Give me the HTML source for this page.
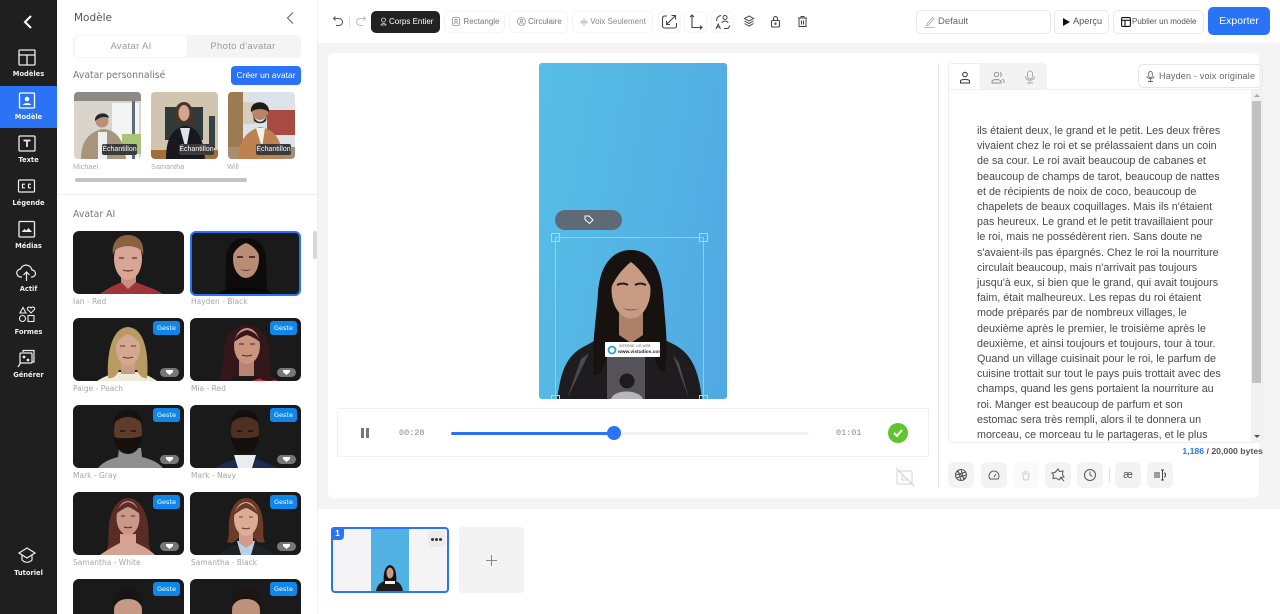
<!DOCTYPE html>
<html lang="fr"><head><meta charset="utf-8"><title>Éditeur</title>
<style>
html,body{margin:0;padding:0;width:1280px;height:614px;overflow:hidden;background:#fff;font-family:"Liberation Sans",sans-serif}
*{box-sizing:border-box}
#root{position:relative;width:1280px;height:614px;overflow:hidden;background:#fff}
.a{position:absolute}
.t{position:absolute;white-space:nowrap}
#side{left:0;top:0;width:57px;height:614px;background:#1f1f1f}
.nav{position:absolute;left:0;width:57px;height:43px;color:#fff;font:bold 6.7px "DejaVu Sans",sans-serif;text-align:center}
.nav svg{position:absolute;left:15px;top:-1px}
.nav span{position:absolute;left:0;right:0;top:21px;color:#f0f0f0}
.p{font-family:"DejaVu Sans",sans-serif}
.lab{position:absolute;font:7.5px "DejaVu Sans",sans-serif;color:#a6a6a6;white-space:nowrap}
.card{position:absolute;width:111px;height:63px;border-radius:6px;background:#1a1a1a;overflow:hidden}
.card svg{position:absolute;left:0;top:0}
.g{position:absolute;right:4px;top:3px;width:27px;height:14px;background:#0f87ea;color:#fff;border-radius:3px;font:6.5px/14px "DejaVu Sans",sans-serif;text-align:center}
.d{position:absolute;right:5px;bottom:4px;width:19px;height:9px;background:#777;border-radius:5px}
.d:after{content:"";position:absolute;left:6px;top:2px;width:7px;height:5px;background:#fff;clip-path:polygon(0 0,100% 0,100% 40%,50% 100%,0 40%)}
.btn{position:absolute;top:11px;height:22px;border:1px solid #f4f4f4;border-radius:5px;font-size:8px;color:#777;line-height:20px;white-space:nowrap;text-align:center}
.ic{position:absolute;top:11px;width:23px;height:22px;border:1px solid #f6f6f6;border-radius:5px}
.tb{position:absolute;top:462px;width:26px;height:26px;background:#f3f3f3;border-radius:6px}
.tb svg{position:absolute;left:6px;top:6px}
#txt{left:977px;top:124px;font-size:10.75px;line-height:15.2px;color:#4a4a4a;white-space:nowrap}
.sm{position:absolute;top:144px;width:35px;height:11px;background:#3a3a3a;border-radius:2px;color:#fff;font-size:7px;line-height:11px;text-align:center}
svg{display:block}
</style></head><body><div id="root">

<div class="a" id="side"></div>
<svg class="a" style="left:21px;top:14px" width="14" height="16" viewBox="0 0 14 16" fill="none" stroke="#fff" stroke-width="2"><path d="M10 2 4 8l6 6"/></svg>

<div class="nav" style="top:49px"><svg width="23" height="23" viewBox="0 0 23 23" fill="none" stroke="#eee" stroke-width="1.300"><rect x="4" y="2" width="16" height="15" rx="1"/><path d="M4 7h16M12 7v10"/></svg><span>Modèles</span></div>
<div class="a" style="left:0;top:86px;width:57px;height:42px;background:#2b73f6"></div>
<div class="nav" style="top:92px"><svg width="23" height="23" viewBox="0 0 23 23" fill="none"><rect x="4.500" y="2" width="15" height="15" rx="1" stroke="#fff" stroke-width="1.300"/><circle cx="12" cy="8" r="2.300" fill="#fff"/><path d="M8 14c0-2.500 8-2.500 8 0z" fill="#fff"/></svg><span>Modèle</span></div>
<div class="nav" style="top:135px"><svg width="23" height="23" viewBox="0 0 23 23" fill="none" stroke="#eee" stroke-width="1.300"><rect x="4" y="2" width="16" height="15" rx="1"/><path d="M8.500 6.500h7M12 6.500V13" stroke-width="1.700"/></svg><span>Texte</span></div>
<div class="nav" style="top:178px"><svg width="23" height="23" viewBox="0 0 23 23" fill="none" stroke="#eee" stroke-width="1.200"><rect x="3.500" y="3" width="16" height="12" rx="1"/><path d="M10 7.200H7.500v3.600H10M16 7.200h-2.500v3.600H16"/></svg><span>Légende</span></div>
<div class="nav" style="top:221px"><svg width="23" height="23" viewBox="0 0 23 23" fill="none"><rect x="4" y="1.500" width="15.500" height="15.500" rx="1" stroke="#eee" stroke-width="1.300"/><path d="M6.500 12l3-3 2 1.500 2-2.500 3.500 4z" fill="#eee"/></svg><span>Médias</span></div>
<div class="nav" style="top:264px"><svg width="23" height="23" viewBox="0 0 23 23" fill="none" stroke="#eee" stroke-width="1.200"><path d="M7 14H6a4 4 0 0 1-.500-8 6 6 0 0 1 11.500 1 3.500 3.500 0 0 1 0 7h-1M11.500 18V9M8.500 12l3-3 3 3"/></svg><span>Actif</span></div>
<div class="nav" style="top:307px"><svg width="23" height="23" viewBox="0 0 23 23" fill="none" stroke="#eee" stroke-width="1.100"><path d="M8 1.500l3 5.500H5zM16 7l-3.300-3.300c-1.500-2 1.700-3.700 3.300-1.700 1.600-2 4.800-.3 3.300 1.700zM4.500 12.500a3 3 0 1 0 6 0 3 3 0 1 0-6 0z"/><rect x="13" y="9.500" width="6" height="6"/></svg><span>Formes</span></div>
<div class="nav" style="top:350px"><svg width="23" height="23" viewBox="0 0 23 23" fill="none" stroke="#eee" stroke-width="1.200"><path d="M8 3V1.500h11v11.500h-2"/><rect x="5" y="4" width="12" height="10" rx="1"/><circle cx="9" cy="8" r=".8" fill="#eee"/><circle cx="13" cy="11" r=".8" fill="#eee"/><path d="M5.500 14 3 18"/></svg><span>Générer</span></div>
<div class="nav" style="top:546px"><svg style="top:0" width="23" height="20" viewBox="0 0 23 20" fill="none" stroke="#eee" stroke-width="1.200"><path d="M12 2 4 7l8 5 8-5zM7 9v5c3 3 7 3 10 0V9"/></svg><span style="top:23px">Tutoriel</span></div>

<div class="a" style="left:317px;top:0;width:1px;height:614px;background:#efefef"></div>

<div class="t p" style="left:74px;top:12px;font-size:10.500px;color:#555">Modèle</div>
<svg class="a" style="left:284px;top:11px" width="12" height="14" viewBox="0 0 12 14" fill="none" stroke="#666" stroke-width="1.100"><path d="M9 1.500 3.500 7 9 12.500"/></svg>

<div class="a" style="left:73px;top:35px;width:228px;height:23px;background:#f4f4f4;border-radius:5px"></div>
<div class="a" style="left:75px;top:36px;width:112px;height:21px;background:#fff;border-radius:4px"></div>
<div class="t" style="left:75px;top:41px;width:112px;text-align:center;font-size:9.500px;color:#9a9a9a;letter-spacing:.3px">Avatar AI</div>
<div class="t" style="left:187px;top:41px;width:112px;text-align:center;font-size:9.500px;color:#9a9a9a;letter-spacing:.3px">Photo d'avatar</div>
<div class="t p" style="left:73px;top:70px;font-size:9.300px;color:#777">Avatar personnalisé</div>
<div class="a" style="left:231px;top:66px;width:70px;height:19px;background:#2b73f6;border-radius:4px;color:#fff;font-size:8.500px;line-height:19px;text-align:center">Créer un avatar</div>

<!-- custom avatars -->
<div class="a" style="left:74px;top:92px;width:67px;height:67px;border-radius:4px;overflow:hidden"><svg width="67" height="67" viewBox="0 0 67 67"><rect width="67" height="67" fill="#d9d5cd"/><rect width="67" height="9" fill="#8b8a84"/><rect x="38" y="11" width="27" height="56" fill="#f3f5f5"/><rect x="58" y="9" width="3" height="58" fill="#5d6b7a"/><rect x="48" y="42" width="19" height="20" fill="#a9c57a"/><path d="M7 67c0-16 6-26 21-30 15 0 22 12 24 30z" fill="#a8967c"/><rect x="24" y="40" width="9" height="27" fill="#efefef"/><circle cx="28" cy="29" r="6.500" fill="#bb8f78"/><path d="M21 29c-1-9 13-10 14-3-5-2-9-1-14 3z" fill="#23252b"/></svg></div>
<div class="a" style="left:151px;top:92px;width:67px;height:67px;border-radius:4px;overflow:hidden"><svg width="67" height="67" viewBox="0 0 67 67"><rect width="67" height="67" fill="#cfc5b0"/><rect x="14" y="15" width="38" height="33" fill="#2e3a3c"/><rect y="58" width="67" height="9" fill="#a66d3c"/><rect x="58" y="24" width="6" height="32" fill="#364245"/><path d="M15 67c0-20 6-30 18-33 14 0 19 12 21 33z" fill="#17191f"/><path d="M29 36h10l-4 22z" fill="#e3e3ee"/><path d="M24 31c-3-12 2-21 9-21s11 9 9 21z" fill="#4a3428"/><ellipse cx="33" cy="21" rx="5.500" ry="8" fill="#d3a78f"/></svg></div>
<div class="a" style="left:228px;top:92px;width:67px;height:67px;border-radius:4px;overflow:hidden"><svg width="67" height="67" viewBox="0 0 67 67"><rect width="67" height="67" fill="#dbe3e8"/><rect width="15" height="67" fill="#9c7a52"/><rect x="15" y="10" width="12" height="22" fill="#d6cdbf"/><rect x="39" y="18" width="28" height="25" fill="#a84a42"/><rect y="55" width="67" height="12" fill="#a88d70"/><path d="M10 67c1-18 8-28 22-32 15 2 22 14 23 32z" fill="#bd8250"/><path d="M28 36h9l-3 20z" fill="#f3efe9"/><circle cx="32" cy="20" r="8" fill="#b98565"/><path d="M23 20c-2-13 19-13 18 0-5-4-13-4-18 0z" fill="#201a18"/><path d="M25 23c3 9 11 9 14 0l-1 6c-3 3-9 3-12 0z" fill="#3b2a22"/></svg></div>
<div class="sm" style="left:102px">Échantillon</div>
<div class="sm" style="left:179px">Échantillon</div>
<div class="sm" style="left:256px">Échantillon</div>
<div class="t" style="left:73px;top:162px;font-size:7.300px;color:#aaa">Michael</div>
<div class="t" style="left:151px;top:162px;font-size:7.300px;color:#aaa">Samantha</div>
<div class="t" style="left:227px;top:162px;font-size:7.300px;color:#aaa">Will</div>
<div class="a" style="left:75px;top:178px;width:172px;height:4px;background:#c4c4c4;border-radius:2px"></div>
<div class="a" style="left:57px;top:194px;width:260px;height:1px;background:#efefef"></div>
<div class="t p" style="left:73px;top:209px;font-size:9.300px;color:#777">Avatar AI</div>
<div class="a" style="left:313px;top:231px;width:4px;height:28px;background:#d8d8d8;border-radius:2px"></div>

<!-- AI cards -->
<div class="card" style="left:73px;top:231px"><svg width="111" height="63" viewBox="0 0 111 63"><path d="M27 63c8-6 15-9 22-12h13c8 3 20 7 28 12z" fill="#a03539"/><path d="M48 42v9l7 7 8-7v-9z" fill="#c99080"/><ellipse cx="55" cy="28" rx="14" ry="21" fill="#d9a696"/><path d="M40 24c-2-13 6-20 15-20s17 6 15 20c-2-6-5-8-15-9-10 1-13 3-15 9z" fill="#8a6242"/><path d="M46 27h5M59 27h5M50 39q5 2 10 0" stroke="#5a3530" stroke-width="1.200" fill="none"/></svg></div>
<div class="a" style="left:190px;top:231px;width:111px;height:65px;border-radius:6px;background:#1a1a1a;border:2px solid #2b73f6;overflow:hidden"><svg width="107" height="61" viewBox="0 0 107 61"><path d="M33 61c1-14 0-32 2-42 2-9 10-14 19-14s17 5 19 14c2 10 1 28 3 42z" fill="#0e0b0b"/><path d="M24 61c8-3 12-5 18-6h24c6 1 11 3 16 6z" fill="#060606"/><ellipse cx="54" cy="26" rx="13" ry="19" fill="#b98c75"/><path d="M41 22c1-8 6-14 13-16 7 2 12 8 13 16-2-5-7-10-13-12-6 2-11 7-13 12z" fill="#0e0b0b"/><path d="M45 24h6M57 24h6" stroke="#2c1a14" stroke-width="1.400"/><path d="M48 36q6 2 12 0-6 4-12 0z" fill="#6a3b35"/></svg></div>
<div class="lab" style="left:73px;top:296.500px">Ian - Red</div>
<div class="lab" style="left:191px;top:296.500px">Hayden - Black</div>

<div class="card" style="left:73px;top:318px"><svg width="111" height="63" viewBox="0 0 111 63"><path d="M24 63c8-5 14-7 22-9h18c9 2 14 5 20 9z" fill="#f1ead8"/><path d="M35 60c-1-20 2-50 20-51 18 1 21 31 19 51-4 1-8-2-10-8H46c-2 6-6 9-11 8z" fill="#b99a62"/><path d="M48 42h14v14H48z" fill="#c89c86"/><ellipse cx="55" cy="30" rx="12" ry="18" fill="#d4a890"/><path d="M43 26c1-8 6-13 12-14 6 1 11 6 12 14-3-5-7-8-12-10-5 2-9 5-12 10z" fill="#b99a62"/><path d="M47 28h5M58 28h5M50 39q5 2 10 0" stroke="#5a3530" stroke-width="1.100" fill="none"/></svg><div class="g">Geste</div><div class="d"></div></div>
<div class="card" style="left:190px;top:318px"><svg width="111" height="63" viewBox="0 0 111 63"><path d="M62 63l14-5 12 5z" fill="#d02a28"/><path d="M29 62c4-8 4-20 5-32 2-14 12-23 23-23s20 9 22 23c1 12 0 24 5 32-5 2-13 1-17-4H45c-4 5-10 6-16 4z" fill="#33171b"/><path d="M49 42h15v16H49z" fill="#b98570"/><ellipse cx="57" cy="28" rx="13" ry="18" fill="#c9957f"/><path d="M44 24c2-7 7-11 13-12 6 1 11 5 13 12-4-3-9-6-13-7-4 1-9 4-13 7z" fill="#33171b"/><path d="M49 26h5M60 26h5M52 37q5 2 10 0" stroke="#4a2420" stroke-width="1.100" fill="none"/></svg><div class="g">Geste</div><div class="d"></div></div>
<div class="lab" style="left:73px;top:383.500px">Paige - Peach</div>
<div class="lab" style="left:191px;top:383.500px">Mia - Red</div>

<div class="card" style="left:73px;top:405px"><svg width="111" height="63" viewBox="0 0 111 63"><path d="M25 63c6-7 13-9 20-11l1-9h22l1 9c8 2 16 5 21 11z" fill="#8f8f8f"/><ellipse cx="55" cy="26" rx="14" ry="21" fill="#5e3b2b"/><path d="M41 31c3 3 7 2 14 2s11-1 14-2c0 10-6 18-14 18s-14-8-14-18z" fill="#17100d"/><path d="M41 18c1-10 8-13 14-13s13 3 14 13c-4-4-9-6-14-6s-10 2-14 6z" fill="#17100d"/><path d="M47 26h5M58 26h5" stroke="#1a0f0a" stroke-width="1.200"/></svg><div class="g">Geste</div><div class="d"></div></div>
<div class="card" style="left:190px;top:405px"><svg width="111" height="63" viewBox="0 0 111 63"><path d="M26 63c6-5 14-7 20-9h20c7 2 14 5 21 9z" fill="#1d2a55"/><path d="M44 50h22l-4 13H48z" fill="#ececec"/><ellipse cx="55" cy="26" rx="14" ry="21" fill="#4e3023"/><path d="M41 31c3 3 7 2 14 2s11-1 14-2c0 10-6 18-14 18s-14-8-14-18z" fill="#140e0c"/><path d="M41 18c1-10 8-13 14-13s13 3 14 13c-4-4-9-6-14-6s-10 2-14 6z" fill="#140e0c"/><path d="M47 26h5M58 26h5" stroke="#120a08" stroke-width="1.200"/></svg><div class="g">Geste</div><div class="d"></div></div>
<div class="lab" style="left:73px;top:470.500px">Mark - Gray</div>
<div class="lab" style="left:191px;top:470.500px">Mark - Navy</div>

<div class="card" style="left:73px;top:492px"><svg width="111" height="63" viewBox="0 0 111 63"><path d="M33 60c3-6 2-15 3-28 2-16 10-26 19-26s18 10 20 26c1 13 0 22 3 28-6 2-12 1-15-3H47c-3 4-8 5-14 3z" fill="#5a2c26"/><path d="M27 63c7-5 14-9 20-12v-9h16v9c7 3 14 7 19 12z" fill="#d6a393"/><ellipse cx="55" cy="26" rx="11.500" ry="17" fill="#c9988a"/><path d="M43 22c2-7 7-11 12-12 5 1 10 5 12 12-4-3-8-6-12-7-4 1-8 4-12 7z" fill="#5a2c26"/><path d="M48 24h4M58 24h4M51 35q4 1.500 8 0" stroke="#5a2a26" stroke-width="1.100" fill="none"/></svg><div class="g">Geste</div><div class="d"></div></div>
<div class="card" style="left:190px;top:492px"><svg width="111" height="63" viewBox="0 0 111 63"><path d="M37 50c3-6 1-11 2-20 1-14 8-24 17-24s16 10 17 24c1 9-1 14 2 20-6 2-9-1-11-4H48c-3 4-6 6-11 4z" fill="#6b3b28"/><path d="M28 63c8-6 14-9 20-10h16c8 1 15 4 20 10z" fill="#1f2226"/><path d="M47 49h18l-4 14H51z" fill="#b8d0e6"/><path d="M49 40h14v11l-7 5-7-5z" fill="#d09d88"/><ellipse cx="56" cy="27" rx="12" ry="17" fill="#dcac97"/><path d="M44 23c2-7 7-11 12-12 5 1 10 5 12 12-4-3-8-6-12-7-4 1-8 4-12 7z" fill="#6b3b28"/><path d="M49 25h4M59 25h4M52 36q4 1.500 8 0" stroke="#6b3b32" stroke-width="1.100" fill="none"/></svg><div class="g">Geste</div><div class="d"></div></div>
<div class="lab" style="left:73px;top:557.500px">Samantha - White</div>
<div class="lab" style="left:191px;top:557.500px">Samantha - Black</div>

<div class="card" style="left:73px;top:579px"><svg width="111" height="63" viewBox="0 0 111 63"><ellipse cx="55" cy="32" rx="14" ry="20" fill="#c49a84"/><path d="M41 28c-2-13 6-19 14-19s16 6 14 19c-3-5-6-8-14-8s-11 3-14 8z" fill="#181414"/></svg><div class="g">Geste</div></div>
<div class="card" style="left:190px;top:579px"><svg width="111" height="63" viewBox="0 0 111 63"><ellipse cx="56" cy="32" rx="14" ry="20" fill="#bd917a"/><path d="M42 28c-2-13 6-20 14-20s16 7 14 20c-3-5-6-8-14-8s-11 3-14 8z" fill="#1c1513"/></svg><div class="g">Geste</div></div>

<!-- toolbar -->
<div class="a" style="left:318px;top:43px;width:962px;height:571px;background:#fff"></div>
<div class="a" style="left:318px;top:43px;width:962px;height:466px;background:#f4f4f5"></div>
<svg class="a" style="left:332px;top:15px" width="12" height="13" viewBox="0 0 12 13" fill="none" stroke="#555" stroke-width="1"><path d="M3.500 1.500 1.500 3.500l2 2M1.500 3.500h5.500a3 3 0 0 1 0 7H4"/></svg>
<div class="a" style="left:349px;top:16px;width:1px;height:11px;background:#ddd"></div>
<svg class="a" style="left:355px;top:15px" width="12" height="13" viewBox="0 0 12 13" fill="none" stroke="#bbb" stroke-width="1"><path d="M8.500 1.500l2 2-2 2M10.500 3.500H5a3 3 0 0 0 0 7h3"/></svg>
<div class="a" style="left:371px;top:11px;width:69px;height:22px;background:#222;border-radius:5px;color:#fff;font-size:8px;line-height:22px;padding-left:18px;white-space:nowrap">Corps Entier</div>
<svg class="a" style="left:379px;top:17px" width="9" height="9" viewBox="0 0 9 9" fill="none" stroke="#ddd" stroke-width=".8"><circle cx="4.500" cy="3" r="2"/><path d="M1.500 8h6M2.500 8c0-2 4-2 4 0"/></svg>
<div class="btn" style="left:444px;width:61px;padding-left:14px">Rectangle</div>
<svg class="a" style="left:452px;top:17px" width="8" height="9" viewBox="0 0 8 9" fill="none" stroke="#999" stroke-width=".8"><rect x=".5" y=".5" width="7" height="8" rx="1"/><circle cx="4" cy="3.500" r="1.300"/><path d="M2 7c0-1.500 4-1.500 4 0"/></svg>
<div class="btn" style="left:509px;width:59px;padding-left:13px">Circulaire</div>
<svg class="a" style="left:517px;top:17px" width="9" height="9" viewBox="0 0 9 9" fill="none" stroke="#999" stroke-width=".8"><circle cx="4.500" cy="4.500" r="4"/><circle cx="4.500" cy="3.500" r="1.300"/><path d="M2.500 7c0-1.500 4-1.500 4 0"/></svg>
<div class="btn" style="left:572px;width:81px;padding-left:11px;color:#888">Voix Seulement</div>
<svg class="a" style="left:580px;top:18px" width="8" height="8" viewBox="0 0 8 8" stroke="#bbb" stroke-width="1"><path d="M4 0v8M0 4h8M2 2v4M6 2v4"/></svg>
<div class="ic" style="left:658px"></div><div class="ic" style="left:684px"></div><div class="ic" style="left:711px"></div>
<svg class="a" style="left:661px;top:14px" width="17" height="16" viewBox="0 0 17 16" fill="none" stroke="#444" stroke-width="1.100"><path d="M6 2H3.500A2 2 0 0 0 1.500 4v8a2 2 0 0 0 2 2h10a2 2 0 0 0 2-2V9M5.500 10.500l9-9M10.500 1.500h4v4M5.500 7v3.500H9"/></svg>
<svg class="a" style="left:688px;top:14px" width="15" height="16" viewBox="0 0 15 16" fill="none" stroke="#444" stroke-width="1.100"><path d="M4 1v12.500h10M2 3l2-2 2 2M12 11.500l2 2-2 2"/></svg>
<svg class="a" style="left:714px;top:14px" width="18" height="16" viewBox="0 0 18 16" fill="none" stroke="#444" stroke-width="1"><circle cx="11" cy="3.500" r="2"/><path d="M8 9c0-2.500 6-2.500 6 0M2 15l2.200-5 2.200 5M2.800 13h2.800M10 14.500h4l2-3M2.500 7C2.500 4 4 2 7 1.500"/></svg>
<svg class="a" style="left:743px;top:15px" width="12" height="12" viewBox="0 0 12 12" fill="none" stroke="#444" stroke-width="1"><path d="M6 1 1.500 3.500 6 6l4.500-2.500zM1.500 6 6 8.500 10.500 6M1.500 8.500 6 11l4.500-2.500"/></svg>
<svg class="a" style="left:770px;top:15px" width="11" height="13" viewBox="0 0 11 13" fill="none" stroke="#444" stroke-width="1.100"><rect x="1.500" y="5.500" width="8" height="6.500" rx="1"/><path d="M3.500 5.500V3.500a2 2 0 0 1 4 0v2"/><circle cx="5.500" cy="8.700" r=".6"/></svg>
<svg class="a" style="left:797px;top:15px" width="11" height="13" viewBox="0 0 11 13" fill="none" stroke="#444" stroke-width="1"><path d="M1 3h9M4 3V1.500h3V3M2 3v8.500h7V3M4.500 5.500v4M6.500 5.500v4"/></svg>

<div class="a" style="left:916px;top:10px;width:135px;height:24px;border:1px solid #e8e8e8;border-radius:5px"></div>
<svg class="a" style="left:924px;top:16px" width="12" height="12" viewBox="0 0 12 12" fill="none" stroke="#aaa" stroke-width=".8"><path d="M3 8 8.500 1.500l1.500 1.300L4.500 9 2.500 10zM0 11.500h11"/></svg>
<div class="t" style="left:938px;top:16px;font-size:9.500px;color:#666">Default</div>
<div class="a" style="left:1054px;top:10px;width:55px;height:24px;border:1px solid #e8e8e8;border-radius:5px"></div>
<svg class="a" style="left:1062px;top:17px" width="9" height="10" viewBox="0 0 9 10"><path d="M1 1l7 4-7 4z" fill="#111"/></svg>
<div class="t" style="left:1073px;top:16px;font-size:9.200px;color:#555">Aperçu</div>
<div class="a" style="left:1113px;top:10px;width:91px;height:24px;border:1px solid #e8e8e8;border-radius:5px"></div>
<svg class="a" style="left:1121px;top:17px" width="10" height="10" viewBox="0 0 10 10" fill="none" stroke="#111" stroke-width="1.100"><rect x=".6" y=".6" width="8.800" height="8.800" rx="1"/><path d="M.6 3.300h8.800M4 3.300v6"/></svg>
<div class="t" style="left:1132px;top:17px;font-size:8px;color:#555">Publier un modèle</div>
<div class="a" style="left:1208px;top:7px;width:62px;height:28px;background:#2b73f6;border-radius:5px;color:#fff;font-size:10.500px;line-height:28px;text-align:center">Exporter</div>

<!-- main panel -->
<div class="a" style="left:328px;top:53px;width:931px;height:445px;background:#fff;border-radius:6px"></div>
<div class="a" style="left:938px;top:63px;width:1px;height:425px;background:#e6e6e6"></div>

<!-- video -->
<div class="a" style="left:539px;top:63px;width:188px;height:336px;border-radius:3px;overflow:hidden;background:linear-gradient(100deg,#57bee6 0%,#54b3e4 55%,#51a8e3 100%)">
<svg width="188" height="336" viewBox="0 0 188 336">
<path d="M18 336c4-26 8-44 30-54l14-8h58l16 8c18 10 24 28 27 54z" fill="#1e1c1e"/>
<path d="M28 336l14-40 8-6zM150 336l-10-36-6-8z" fill="#4b4a4d"/>
<path d="M55 312c-3-28 2-52 4-82 2-30 16-43 33-43s29 13 32 43c2 30 6 54 2 78-6 4-10-10-13-28H72c-3 12-8 34-17 32z" fill="#17110f"/>
<path d="M80 245v27l12 8 12-8v-27z" fill="#ad806a"/>
<ellipse cx="92" cy="227" rx="19.500" ry="28.500" fill="#c89c84"/>
<path d="M72 225c2-17 10-28 20-32 10 4 18 15 20 32-4-10-12-20-20-26-8 6-16 16-20 26z" fill="#17110f"/>
<path d="M78 222q6-3 11 0M96 222q5-3 11 0" stroke="#2e1a12" stroke-width="2" fill="none"/>
<path d="M83 245q9 3 18 0-9 5-18 0z" fill="#8e4a45"/>
<rect x="68" y="294" width="38" height="42" fill="#55525a"/>
<circle cx="88" cy="318" r="7.500" fill="#1d1b1e"/><path d="M72 336c3-10 28-10 32 0z" fill="#b8b5b8"/>
<rect x="66" y="279" width="55" height="15" rx="1" fill="#fff"/>
<circle cx="73" cy="287" r="3.500" fill="none" stroke="#2aa2d8" stroke-width="1.800"/>
<text x="80" y="284" font-size="3.500" fill="#666" font-family="Liberation Sans">INTERNE, LIÉ WEB</text>
<text x="79" y="290" font-size="4.800" font-weight="bold" fill="#222" font-family="Liberation Sans">www.vistudios.com</text>
<rect x="16.500" y="174.500" width="148" height="162" fill="none" stroke="#a5dcf5" stroke-opacity=".7"/>
<g fill="none" stroke="#a5dcf5"><rect x="12.500" y="170.500" width="8" height="8"/><rect x="160.500" y="170.500" width="8" height="8"/><rect x="12.500" y="332.500" width="8" height="8"/><rect x="160.500" y="332.500" width="8" height="8"/></g>
<rect x="16" y="147" width="67" height="20" rx="10" fill="#5e6a78"/>
<path d="M46 153l4 0 4 4-3.500 3.500-4.500-4z" fill="none" stroke="#fff" stroke-width="1"/>
</svg></div>

<!-- player -->
<div class="a" style="left:337px;top:408px;width:592px;height:49px;border:1px solid #f0f0f0;border-radius:2px;background:#fff"></div>
<div class="a" style="left:361px;top:428px;width:3px;height:10px;background:#777"></div>
<div class="a" style="left:366px;top:428px;width:3px;height:10px;background:#777"></div>
<div class="t" style="left:399px;top:428px;font:8.500px 'Liberation Mono',monospace;color:#888">00:28</div>
<div class="a" style="left:451px;top:432px;width:358px;height:3px;background:#f3f3f3;border-radius:2px"></div>
<div class="a" style="left:451px;top:431.500px;width:163px;height:3px;background:#2b73f6;border-radius:2px"></div>
<div class="a" style="left:607px;top:426px;width:14px;height:14px;background:#2b73f6;border-radius:50%"></div>
<div class="t" style="left:836px;top:428px;font:8.500px 'Liberation Mono',monospace;color:#888">01:01</div>
<div class="a" style="left:888px;top:423px;width:20px;height:20px;background:#5fc42e;border-radius:50%"></div>
<svg class="a" style="left:892px;top:428px" width="12" height="10" viewBox="0 0 12 10" fill="none" stroke="#fff" stroke-width="2"><path d="M2 5l3 3 5-6"/></svg>
<svg class="a" style="left:895px;top:467px" width="20" height="20" viewBox="0 0 20 20" fill="none" stroke="#d0d0d0" stroke-width="1"><rect x="2" y="4" width="15" height="13" rx="1"/><path d="M1 1l18 18M7 8v5h5"/></svg>

<!-- tabs -->
<div class="a" style="left:981px;top:63px;width:32px;height:26px;background:#f3f3f3"></div>
<div class="a" style="left:1013px;top:63px;width:34px;height:26px;background:#f3f3f3;border-radius:0 4px 0 0"></div>
<div class="a" style="left:948px;top:63px;width:33px;height:27px;background:#fff;border:1px solid #eee;border-bottom:0;border-radius:4px 0 0 0"></div>
<svg class="a" style="left:959px;top:71px" width="12" height="13" viewBox="0 0 12 13" fill="none" stroke="#333" stroke-width="1"><circle cx="6" cy="3.500" r="2.300"/><path d="M1.500 12V10c0-2 9-2 9 0v2z"/></svg>
<svg class="a" style="left:991px;top:71px" width="14" height="13" viewBox="0 0 14 13" fill="none" stroke="#888" stroke-width=".9"><circle cx="5.500" cy="3.500" r="2.200"/><path d="M1 12v-1.500c0-2.500 9-2.500 9 0V12zM9 1.500a2.200 2.200 0 0 1 0 4M11 8c2 .5 2 2 2 4"/></svg>
<svg class="a" style="left:1024px;top:70px" width="12" height="14" viewBox="0 0 12 14" fill="none" stroke="#aaa" stroke-width="1"><rect x="3.500" y="1" width="5" height="8" rx="2.500"/><path d="M1.500 6.500c0 5 9 5 9 0M6 11v2M3 13h6"/></svg>
<div class="a" style="left:1138px;top:64px;width:125px;height:24px;border:1px solid #e6e6e6;border-radius:5px"></div>
<svg class="a" style="left:1146px;top:71px" width="9" height="11" viewBox="0 0 9 11" fill="none" stroke="#666" stroke-width=".9"><rect x="2.700" y=".5" width="3.600" height="6" rx="1.800"/><path d="M1 5c0 3.500 7 3.500 7 0M4.500 8v2M2 10.500h5"/></svg>
<div class="t" style="left:1159px;top:71px;font-size:9px;color:#666;letter-spacing:.2px">Hayden - voix originale</div>

<!-- text area -->
<div class="a" style="left:948px;top:89px;width:315px;height:354px;border:1px solid #eee;border-radius:0 0 6px 6px"></div>
<div class="a" style="left:1251px;top:90px;width:11px;height:352px;background:#f1f1f1"></div>
<div class="a" style="left:1252px;top:101px;width:9px;height:282px;background:#c1c1c1"></div>
<div class="a" style="left:1254px;top:94px;width:0;height:0;border:3px solid transparent;border-bottom:3px solid #aaa;border-top:0"></div>
<div class="a" style="left:1254px;top:435px;width:0;height:0;border:3px solid transparent;border-top:3px solid #555;border-bottom:0"></div>
<div class="t" id="txt">ils étaient deux, le grand et le petit. Les deux frères<br>vivaient chez le roi et se prélassaient dans un coin<br>de sa cour. Le roi avait beaucoup de cabanes et<br>beaucoup de champs de tarot, beaucoup de nattes<br>et de récipients de noix de coco, beaucoup de<br>chapelets de beaux coquillages. Mais ils n'étaient<br>pas heureux. Le grand et le petit travaillaient pour<br>le roi, mais ne possédèrent rien. Sans doute ne<br>s'avaient-ils pas épargnés. Chez le roi la nourriture<br>circulait beaucoup, mais n'arrivait pas toujours<br>jusqu'à eux, si bien que le grand, qui avait toujours<br>faim, était malheureux. Les repas du roi étaient<br>mode préparés par de nombreux villages, le<br>deuxième après le premier, le troisième après le<br>deuxième, et ainsi toujours et toujours, tour à tour.<br>Quand un village cuisinait pour le roi, le parfum de<br>cuisine trottait sur tout le pays puis trottait avec des<br>champs, quand les gens portaient la nourriture au<br>roi. Manger est beaucoup de parfum et son<br>estomac sera très rempli, alors il te donnera un<br>morceau, ce morceau tu le partageras, et le plus</div>

<div class="t" style="right:17px;top:446px;font-size:8.700px;font-weight:bold;color:#555"><span style="color:#2b73f6">1,186</span> / 20,000 bytes</div>

<div class="tb" style="left:948px"><svg width="14" height="14" viewBox="0 0 14 14" fill="none" stroke="#555" stroke-width="1"><circle cx="7" cy="7" r="5.500"/><path d="M7 1.500 10 12M1.500 7 12 4M3 3l8 8M7 12.500 4 2M12.500 7 2 10"/></svg></div>
<div class="tb" style="left:981px"><svg width="14" height="14" viewBox="0 0 14 14" fill="none" stroke="#555" stroke-width="1"><path d="M3 11a5 5 0 1 1 8 0zM7 9l2-3"/></svg></div>
<div class="tb" style="left:1013px;background:#fafafa"><svg width="14" height="14" viewBox="0 0 14 14" fill="none" stroke="#ccc" stroke-width="1"><path d="M4 8V4M6 7V2.500M8 7V3M10 8V5M4 8l1 4h4l1-4"/></svg></div>
<div class="tb" style="left:1045px"><svg width="14" height="14" viewBox="0 0 14 14" fill="none" stroke="#555" stroke-width="1"><path d="M7 1l1.500 2.500L12 3l-.5 3.500L13 9l-3 .5L8 12l-3-2-3 .5.500-3.500L1 5l3-.5zM9 9l4 4"/></svg></div>
<div class="tb" style="left:1077px"><svg width="14" height="14" viewBox="0 0 14 14" fill="none" stroke="#555" stroke-width="1"><circle cx="7" cy="7" r="5.500"/><path d="M7 3.500V7l2.500 1.500"/></svg></div>
<div class="a" style="left:1109px;top:468px;width:1px;height:14px;background:#ddd"></div>
<div class="tb" style="left:1115px;font-size:11px;color:#555;line-height:26px;text-align:center">æ</div>
<div class="tb" style="left:1147px"><svg width="14" height="14" viewBox="0 0 14 14" fill="none" stroke="#444" stroke-width="1"><path d="M1 5h6M1 7h6M1 9h6M8 2h3M9.500 2v10M8 12h3M11 5c2 0 2 4 0 4"/></svg></div>

<!-- timeline -->
<div class="a" style="left:331px;top:527px;width:118px;height:66px;border:2px solid #2b73f6;border-radius:4px;background:#f4f4f6;overflow:hidden">
<svg width="114" height="62" viewBox="0 0 114 62"><rect x="38" y="0" width="38" height="62" fill="#52b2e4"/><path d="M43 62c1-6 5-9 9-10h10c4 1 7 4 8 10z" fill="#1c1a1c"/><path d="M51 55c-1-8 0-18 6-19 6 1 7 11 6 19z" fill="#16110f"/><ellipse cx="57" cy="44" rx="3.500" ry="5.500" fill="#c89c84"/><rect x="52" y="52" width="10" height="3" fill="#eee"/></svg></div>
<div class="a" style="left:331px;top:527px;width:13px;height:13px;background:#2b73f6;border-radius:3px 0 4px 0;color:#fff;font-size:8.500px;font-weight:bold;line-height:13px;text-align:center">1</div>
<div class="a" style="left:428px;top:531px;width:17px;height:16px;background:#ececec;border-radius:4px"></div>
<div class="a" style="left:431px;top:537.500px;width:3px;height:3px;background:#333;border-radius:50%"></div>
<div class="a" style="left:435px;top:537.500px;width:3px;height:3px;background:#333;border-radius:50%"></div>
<div class="a" style="left:439px;top:537.500px;width:3px;height:3px;background:#333;border-radius:50%"></div>
<div class="a" style="left:459px;top:527px;width:65px;height:66px;background:#f3f3f4;border-radius:3px"></div>
<svg class="a" style="left:485px;top:554px" width="13" height="13" viewBox="0 0 13 13" stroke="#888" stroke-width="1"><path d="M6.500 1v11M1 6.500h11"/></svg>

</div></body></html>
